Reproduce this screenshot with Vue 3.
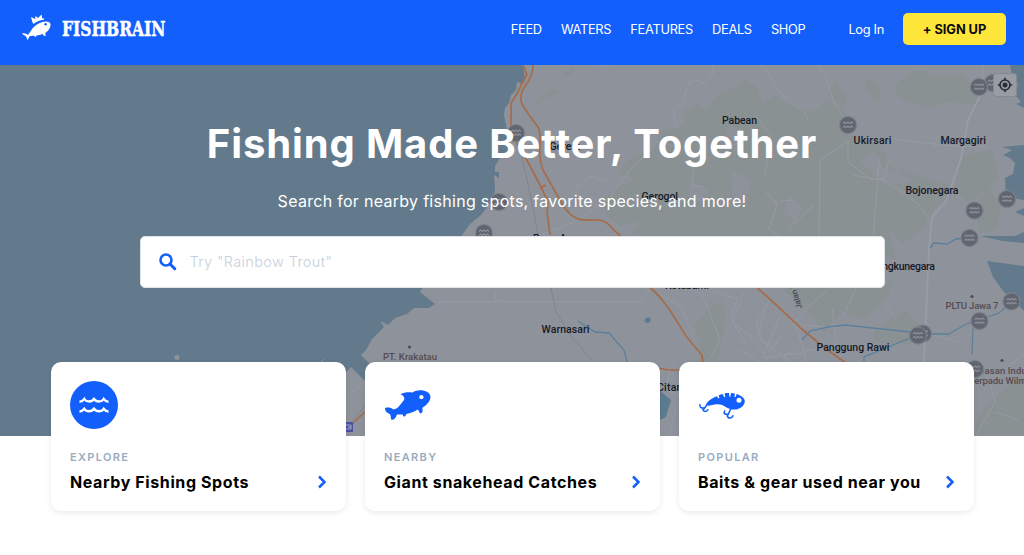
<template>
  <div class="page">
    <header class="header">
      <a class="logo" href="#" aria-label="Fishbrain">
        <svg width="150" height="30" viewBox="20 12 150 30">
          <g fill="#fff">
            <path d="M22 33.600c2.500-.8 4.500.1 5.900 1.500 2.300-3.200 4.200-7.500 8.300-10.200 4.600-3.100 10.200-4.400 13-2.600 2.400 1.500 1.400 5.800-1.500 8.700-.8.800-1.500 1.400-2.400 1.900l.4 3.100-1.700-.2-1.500-1.900c-1.900.9-3.800 1.400-5.900 1.600l-1.100 1.700-1.300-1.400c-2.100 0-4.100.1-5 .8-.2 1.300-.8 2.500-2 3.300-.3-1.700-.7-2.800-1.600-3.900-1.400-.5-2.600-1.200-3.600-2.400z" />
            <path d="M32.200 21.500l-1.200-4.400 4.200 1.800.3-3 2.500 2 3.500-3.300.8 3.800 2-.2-1 1.700c-3.700.1-7 1.600-10 4z" />
          </g>
          <circle cx="45.600" cy="24.300" r="1.200" fill="#125ffc" />
          <text class="wordmark" x="62" y="35.800" textLength="103.500" lengthAdjust="spacingAndGlyphs">FISHBRAIN</text>
        </svg>
      </a>
      <nav class="nav">
        <a v-for="item in navItems" :key="item" href="#">{{ item }}</a>
      </nav>
      <a class="login" href="#">Log In</a>
      <button class="signup">+ SIGN UP</button>
    </header>

    <section class="hero">
      <svg class="map" viewBox="0 65 1024 371" width="1024" height="371">
        <rect y="65" width="1024" height="371" fill="#627a8c" />
        <path
          class="land"
          d="M523 65L525 78L523 84L517 82L516 90L511 95L509 103L505 108L504 115L507 130L508 150L500 158L495 166V172H499V178L494 175L495 190L493 200L480 216L470 224L455 245L425 284L420 292L435 304L429 308L414 308L407 314L395 318L388 325L380 321L384 327L372 339L366 350L361 355L368 362L380 380L364 380L358 374L351 367L340 379L330 436H1024V311L1003 291L993 277L987 261L1024 266V243L1003 241L980 236H1015L1024 232V216L1015 212L1024 208V200L1006 197L1005 178L1013 174L1015 163L1010 158L1003 155L1012 150L1002 147L1024 145V108L1016 104L1021 102L1016 96L1018 84L1012 76L1010 65Z"
        />
        <path class="green" d="M685 112L697 103L706 110L720 92L736 88L744 78L757 88L762 104L775 95L790 105L815 112L826 99L846 111L851 135L880 145L895 172L910 180L905 214L890 228L896 262L889 295L865 320L842 311L825 333L806 310L790 296L763 272L735 255L712 249L690 246L672 235L648 239L633 233L640 221L621 226L608 218L601 200L617 187L637 179L616 174L632 157L654 147L662 130L679 128Z" />
        <path class="green" d="M894 91Q900 73 922 70L937 77L963 74L968 82L985 87L979 105L945 102L932 108L910 103L898 96ZM900 168L930 180L960 189L938 205L920 231L902 244L890 230ZM963 155L992 150L999 177L989 190L967 203L955 187ZM710 308L721 300L726 310L724 333L716 363H698L700 342L694 325ZM875 330L906 310L924 330L909 345L871 342ZM991 402L1014 381L1024 377V436H974L980 412Z" />
        <path class="green" d="M537 98L556 88L559 93L543 99L536 106ZM563 73L572 67L575 71L566 78ZM850 363H894V369H850ZM868 77L878 88L882 99L875 103L865 86ZM835 78L848 100L842 106L828 96ZM975 203L990 190L1002 207L995 230L979 233Z" />
        <path class="pale" d="M860 161L873 151L885 170L905 174L911 181L886 186L875 175ZM731 170L751 180L746 206L732 197ZM860 268L890 256L900 266L888 284L867 290ZM730 120L739 138L735 151L724 139ZM790 195L802 207L795 223L784 211ZM690 181L709 190L701 203L688 197Z" />
        <g class="street">
          <path d="M595 65l10 1 16-2M713 65v9l-9 10q-13-10-17 4l-5 17-9 5 3 17 8-7M763 65l18 29 23 18 4 8M818 65l8 12 8 26 14 21M983 65v17M848 140l-28 21-1 80-8 28M848 140v22l24 18 13-2 4-20M879 157l-2 31-4 50M853 175l34 6 31 23 11 16M885 138l50 6 4-11M933 145l55 2" />
          <path d="M525 240l48-17 36-24 24-33 15-13 9-12 20 6M574 190l16-14 15 5M694 165l-2 20 12 2M764 190l13 14-8 25 15 10M773 202l18-2M815 204l-28 26M755 115l16 20-6 40" />
          <path d="M438 302h201l12-14M495 292v8h8M700 292l8 16 12 32-12 22M743 292l-10 31 21 16 14 22M770 300l-14 22 7 20 29 20M827 290l-18 16-14 16 12 40M832 308l5 36-38 9-36 5M792 324l46 4M857 285l-13 30M925 332l32 10M885 303l12 18" />
          <path d="M662 365v70M670 370l-4 20 13 5M669 435l8-28M976 436l19-34-5-20 34-28M995 412l24 8M347 397l17-15M660 294l20 12 14 28M715 292l22 7-6 20 15 25M765 310l-8 30 15 4M780 316l-16 37M740 350l20 12M783 334l-15 20M797 345l-15 14" />
        </g>
        <path class="main-street" d="M980 96l-12 24-7 39-15 42-14 16-3 31-5 114" />
        <path class="dark-track" d="M519 145l7 30 8 38 4 23M551 288l5 24 17 27 20 22M345 430l20-24" />
        <g class="river">
          <path d="M578 321l17 11 14 1 15 17 3 12M802 340l8-9 18-4 17-2 65 7M931 334h18l17-10 13-4 20-7 12-10M973 328l-1 26M910 338l-46 19v6M930 248l4-5 13 1 9-5 12-1" />
        </g>
        <path fill="#5c7b91" d="M646 318c5-3 7 5 1 5l-3-2zM660 391l11 9-5 17-6 3z" />
        <g class="highway">
          <path d="M523 65l4 10-5 8-4 9-7 11v24l6 17 12 20 12 23 7 15-1 9 3 24M533 65q0 8-5 17c-6 8-9 14-6 22l7 11 9 12q3 6 2 18-1 16 3 25l13 23 8 14c9 12 15 14 30 13 12-1 16 6 22 12l8 7M540 188l6-3M646 284c25 20 32 43 44 57l12 14 1 8M750 281l22 20 31 29 23 19 20 14M658 368l10 2h12M352 424l13-12" />
        </g>
        <g class="place">
          <text v-for="p in places" :key="p.name" :x="p.x" :y="p.y" :textLength="p.w">{{ p.name }}</text>
        </g>
        <g class="poi">
          <text x="383" y="359.500" textLength="54">PT. Krakatau</text>
          <text x="945.500" y="309" textLength="53">PLTU Jawa 7</text>
          <text x="966" y="373.500" textLength="75">Kawasan Industri</text>
          <text x="969" y="383.500" textLength="66">Terpadu Wilmar</text>
          <circle cx="409.500" cy="347" r="1.600" />
          <circle cx="972" cy="296.500" r="1.600" />
          <circle cx="1002" cy="360.500" r="1.600" />
        </g>
        <text class="street-name" transform="translate(802 308) rotate(-107)">Jalan Raya</text>
        <circle cx="177" cy="357.500" r="2.500" fill="#8e939b" />
        <path d="M321 362l3-3" stroke="#8e939b" />
        <rect x="340" y="422" width="13" height="10" rx="1" fill="#4850a0" />
        <path d="M346 425h5v4h-5m2-2h3" fill="none" stroke="#a6a9c9" />
        <g v-for="pin in pins" :key="pin.join()" :transform="`translate(${pin[0]} ${pin[1]})`">
          <circle class="pin" r="8.600" />
          <path class="pin-waves" d="M-5-1.500l1.700-1.500 1.700 1.500L0-3l1.700 1.500L3.400-3 5-1.500M-5 2.500L-3.300 1l1.700 1.500L0 1l1.700 1.500L3.400 1 5 2.500" />
        </g>
      </svg>

      <button class="locate" aria-label="Locate me">
        <svg width="16" height="16" viewBox="0 0 16 16" fill="none" stroke="#292e38" stroke-width="1.600">
          <circle cx="8" cy="8" r="5" />
          <circle cx="8" cy="8" r="2.500" fill="#292e38" stroke="none" />
          <path d="M8 .8v2.500M8 12.700v2.500M.8 8h2.500M12.700 8h2.500" />
        </svg>
      </button>

      <div class="hero-content">
        <h1>Fishing Made Better, Together</h1>
        <p>Search for nearby fishing spots, favorite species, and more!</p>
        <label class="search">
          <svg width="18" height="18" viewBox="0 0 18 18" fill="none" stroke="#125ffc">
            <circle cx="7" cy="7" r="5.500" stroke-width="2.600" />
            <path d="M11.200 11.200l4.600 4.600" stroke-width="3" stroke-linecap="round" />
          </svg>
          <input v-model="query" type="text" placeholder='Try "Rainbow Trout"' />
        </label>
      </div>
    </section>

    <main class="cards">
      <a v-for="card in cards" :key="card.label" class="card" href="#">
        <svg class="card-icon" width="48" height="48" viewBox="0 0 48 48">
          <template v-if="card.icon === 'waves'">
            <circle cx="24" cy="24" r="24" fill="#125ffc" />
            <path
              fill="none"
              stroke="#fff"
              stroke-width="2.400"
              d="M9.500 20.700c2.500 0 3.300-.7 4.800-2.700 2 3.300 7.400 3.300 9.700 0 2.300 3.300 7.700 3.300 9.700 0 1.500 2 2.300 2.700 4.800 2.700M9.500 30.500c2.500 0 3.300-.7 4.800-2.700 2 3.300 7.400 3.300 9.700 0 2.300 3.300 7.700 3.300 9.700 0 1.500 2 2.300 2.700 4.800 2.700"
            />
          </template>
          <template v-else-if="card.icon === 'fish'">
            <path
              fill="#125ffc"
              d="M1 26.900C4 26 7 26.500 9.200 28.400C12 28 13.200 27.400 14.500 25.700C16.500 23.500 18.500 21 20.300 18.600C20.500 16 19.300 14.500 16.600 13.300C20 11.200 24.500 11.100 28.500 11.600C31.500 9.300 36 8.800 40 9.700C44.500 10.700 46.700 13 46.400 16.700C46 20.500 42.500 24 38.200 26.900C39.300 29.500 38.600 31.700 36.500 32.400C35 31.800 35.200 30 33.800 28.600C30.500 30.600 26.500 32.200 22.200 33C21.900 34.600 21.200 35.500 20.100 35.600C19.200 35.300 18.900 34.600 18.600 33.600C16.300 33.600 14.500 33.200 12.800 33.700C11.800 36.500 10.800 38.800 7.400 38.800C6.500 37.200 7.100 35 5.900 33C3 32 .8 29.700 1 26.900Z"
            />
            <circle cx="37.400" cy="16.200" r="2.100" fill="#fff" />
          </template>
          <template v-else>
            <path
              fill="#125ffc"
              d="M8.300 22.800C10.500 19.300 15 16.500 19 15.300L20.500 17.500L21.400 17L20.600 14.500C22 13.700 23.300 13.200 24.600 12.900L26.200 16.200L27.200 16L26.600 12.400C28 12 29.500 11.900 31 12L31.300 15.800H32.300L33 12.100C34.300 12.100 35.600 12.300 36.800 12.600L36.600 15.900L37.600 16L38.700 13C42.500 14.200 46.600 16.800 46.800 20C46.800 24.500 42 28.500 36.500 28.600C28.500 28.700 27 23 19 23.200C15.500 23.300 12.500 24.700 9.600 24.700Z"
            />
            <circle cx="41" cy="19.300" r="2.500" fill="#fff" />
            <path
              fill="none"
              stroke="#125ffc"
              stroke-width="1.500"
              stroke-linecap="round"
              d="M9 23.500L6.200 27.800M2 23.600C1.200 26 3 27.600 6.200 26.800M4.800 28.500C5.500 31 8.800 31 10 28.700M32.600 28L30.200 33.600M26.700 29.800C25.200 32 27 34 30.200 33M29.300 34.600C29.600 37.800 34 37.900 35 34.800"
            />
          </template>
        </svg>
        <span class="card-label">{{ card.label }}</span>
        <span class="card-row">
          <strong>{{ card.title }}</strong>
          <svg width="9" height="14" viewBox="0 0 9 14" fill="none" stroke="#125ffc" stroke-width="2.500">
            <path d="M1 1.500L6.500 7 1 12.500" />
          </svg>
        </span>
      </a>
    </main>
  </div>
</template>

<script setup>
import { ref } from 'vue'

const query = ref('')

const navItems = ['FEED', 'WATERS', 'FEATURES', 'DEALS', 'SHOP']

const cards = [
  { icon: 'waves', label: 'EXPLORE', title: 'Nearby Fishing Spots' },
  { icon: 'fish', label: 'NEARBY', title: 'Giant snakehead Catches' },
  { icon: 'lure', label: 'POPULAR', title: 'Baits & gear used near you' },
]

const places = [
  { name: 'Pabean', x: 722, y: 124, w: 35 },
  { name: 'Ukirsari', x: 853.5, y: 143.5, w: 38 },
  { name: 'Margagiri', x: 940.5, y: 143.5, w: 45.5 },
  { name: 'Bojonegara', x: 905.5, y: 193.5, w: 53 },
  { name: 'Gerem', x: 549.5, y: 149.5, w: 31 },
  { name: 'Gerogol', x: 641.5, y: 200, w: 36.5 },
  { name: 'Rawa Arum', x: 533, y: 242, w: 51 },
  { name: 'Mangkunegara', x: 868, y: 269.5, w: 67 },
  { name: 'Kotabumi', x: 665, y: 288.5, w: 44 },
  { name: 'Warnasari', x: 541.5, y: 333, w: 48 },
  { name: 'Panggung Rawi', x: 816.5, y: 351, w: 73 },
  { name: 'Citangkil', x: 657, y: 390.5, w: 43 },
]

const pins = [
  [848, 125], [993, 83], [979, 87], [516, 133], [499, 202], [484, 233],
  [1007, 199], [974.5, 210.5], [969.5, 238], [1011.5, 301.5],
  [979.5, 321], [923, 333.5], [918, 335.5], [975, 369],
]
</script>

<style>
body {
  margin: 0;
  background: #fff;
}
</style>

<style scoped>
.page {
  height: 555px;
  overflow: hidden;
  font-family: Inter, "Liberation Sans", sans-serif;
}

a {
  color: inherit;
  text-decoration: none;
}

.header {
  display: flex;
  align-items: center;
  box-sizing: border-box;
  height: 65px;
  padding: 0 18px 7px 20px;
  background: #125ffc;
  color: #fff;
  font-size: 12.8px;
  letter-spacing: -0.3px;
}

.logo {
  display: flex;
  margin: -5px auto 0 0;
}

.wordmark {
  fill: #fff;
  stroke: #fff;
  stroke-width: 0.5px;
  font: bold 19.5px "DejaVu Serif", serif;
  letter-spacing: 0;
}

.nav {
  display: flex;
  gap: 19.2px;
}

.login {
  margin: 0 19px 0 43px;
}

.signup {
  width: 103px;
  height: 32px;
  padding: 0;
  border: 0;
  border-radius: 5px;
  background: #ffe63b;
  color: #0b0b0b;
  font: 700 12.8px Inter, sans-serif;
  letter-spacing: -0.05px;
}

.hero {
  position: relative;
  height: 371px;
}

.map {
  position: absolute;
  inset: 0;
}

.land,
.pale {
  fill: #8e939b;
}

.green {
  fill: #8a9193;
}

.street {
  fill: none;
  stroke: #979ba4;
  stroke-width: 0.9;
}

.main-street {
  fill: none;
  stroke: #999da8;
  stroke-width: 1.7;
}

.dark-track {
  fill: none;
  stroke: #7c8188;
  stroke-width: 0.8;
}

.river {
  fill: none;
  stroke: #5c809b;
  stroke-width: 1.3;
}

.highway {
  fill: none;
  stroke: #a66c49;
  stroke-width: 1.7;
}

.place {
  fill: #151a28;
  font: 500 10.5px Roboto, sans-serif;
}

.poi {
  fill: #574a4e;
  font: 500 9.5px Roboto, sans-serif;
}

.street-name {
  fill: #343946;
  font: 8px Roboto, sans-serif;
}

.pin {
  fill: #60656f;
  stroke: #7d828b;
  stroke-width: 1.2;
}

.pin-waves {
  fill: none;
  stroke: #8c9099;
  stroke-width: 1.1;
}

.locate {
  position: absolute;
  top: 8px;
  right: 7px;
  display: flex;
  align-items: center;
  justify-content: center;
  width: 24px;
  height: 24px;
  padding: 0;
  border: 1px solid #858991;
  border-radius: 3px;
  background: #999ca3;
}

.hero-content {
  position: relative;
  display: flex;
  flex-direction: column;
  align-items: center;
  padding-top: 55px;
  color: #fff;
}

h1 {
  margin: 0;
  font-size: 40px;
  font-weight: 700;
  letter-spacing: 0.87px;
  line-height: 48px;
  white-space: nowrap;
}

p {
  margin: 22px 0 0;
  font-size: 16px;
  font-weight: 400;
  letter-spacing: 0.29px;
  line-height: 22px;
  white-space: nowrap;
}

.search {
  display: flex;
  align-items: center;
  gap: 13px;
  box-sizing: border-box;
  width: 745px;
  height: 52px;
  margin-top: 24px;
  padding: 0 18px 1px;
  border: 1px solid #dde3e9;
  border-radius: 5px;
  background: #fff;
}

.search input {
  flex: 1;
  padding: 0;
  border: 0;
  outline: 0;
  background: none;
  font: 300 14.5px Inter, sans-serif;
  letter-spacing: 0.38px;
}

.search input::placeholder {
  color: #c7cfdc;
}

.cards {
  position: relative;
  display: grid;
  grid-template-columns: repeat(3, 295px);
  gap: 19px;
  margin: -74px 0 0 51px;
}

.card {
  display: flex;
  flex-direction: column;
  box-sizing: border-box;
  height: 149px;
  padding: 19px;
  border-radius: 10px;
  background: #fff;
  box-shadow: 0 2px 6px rgba(0, 0, 0, 0.08);
}

.card-icon {
  margin-left: 0.4px;
}

.card-label {
  margin-top: 21px;
  color: #9aacc0;
  font-size: 11px;
  font-weight: 600;
  letter-spacing: 1.35px;
  line-height: 14px;
}

.card-row {
  display: flex;
  align-items: center;
  justify-content: space-between;
  margin-top: 8px;
  color: #000;
  font-size: 16px;
  line-height: 20px;
}

.card-row strong {
  font-weight: 650;
  letter-spacing: 0.6px;
}
</style>
